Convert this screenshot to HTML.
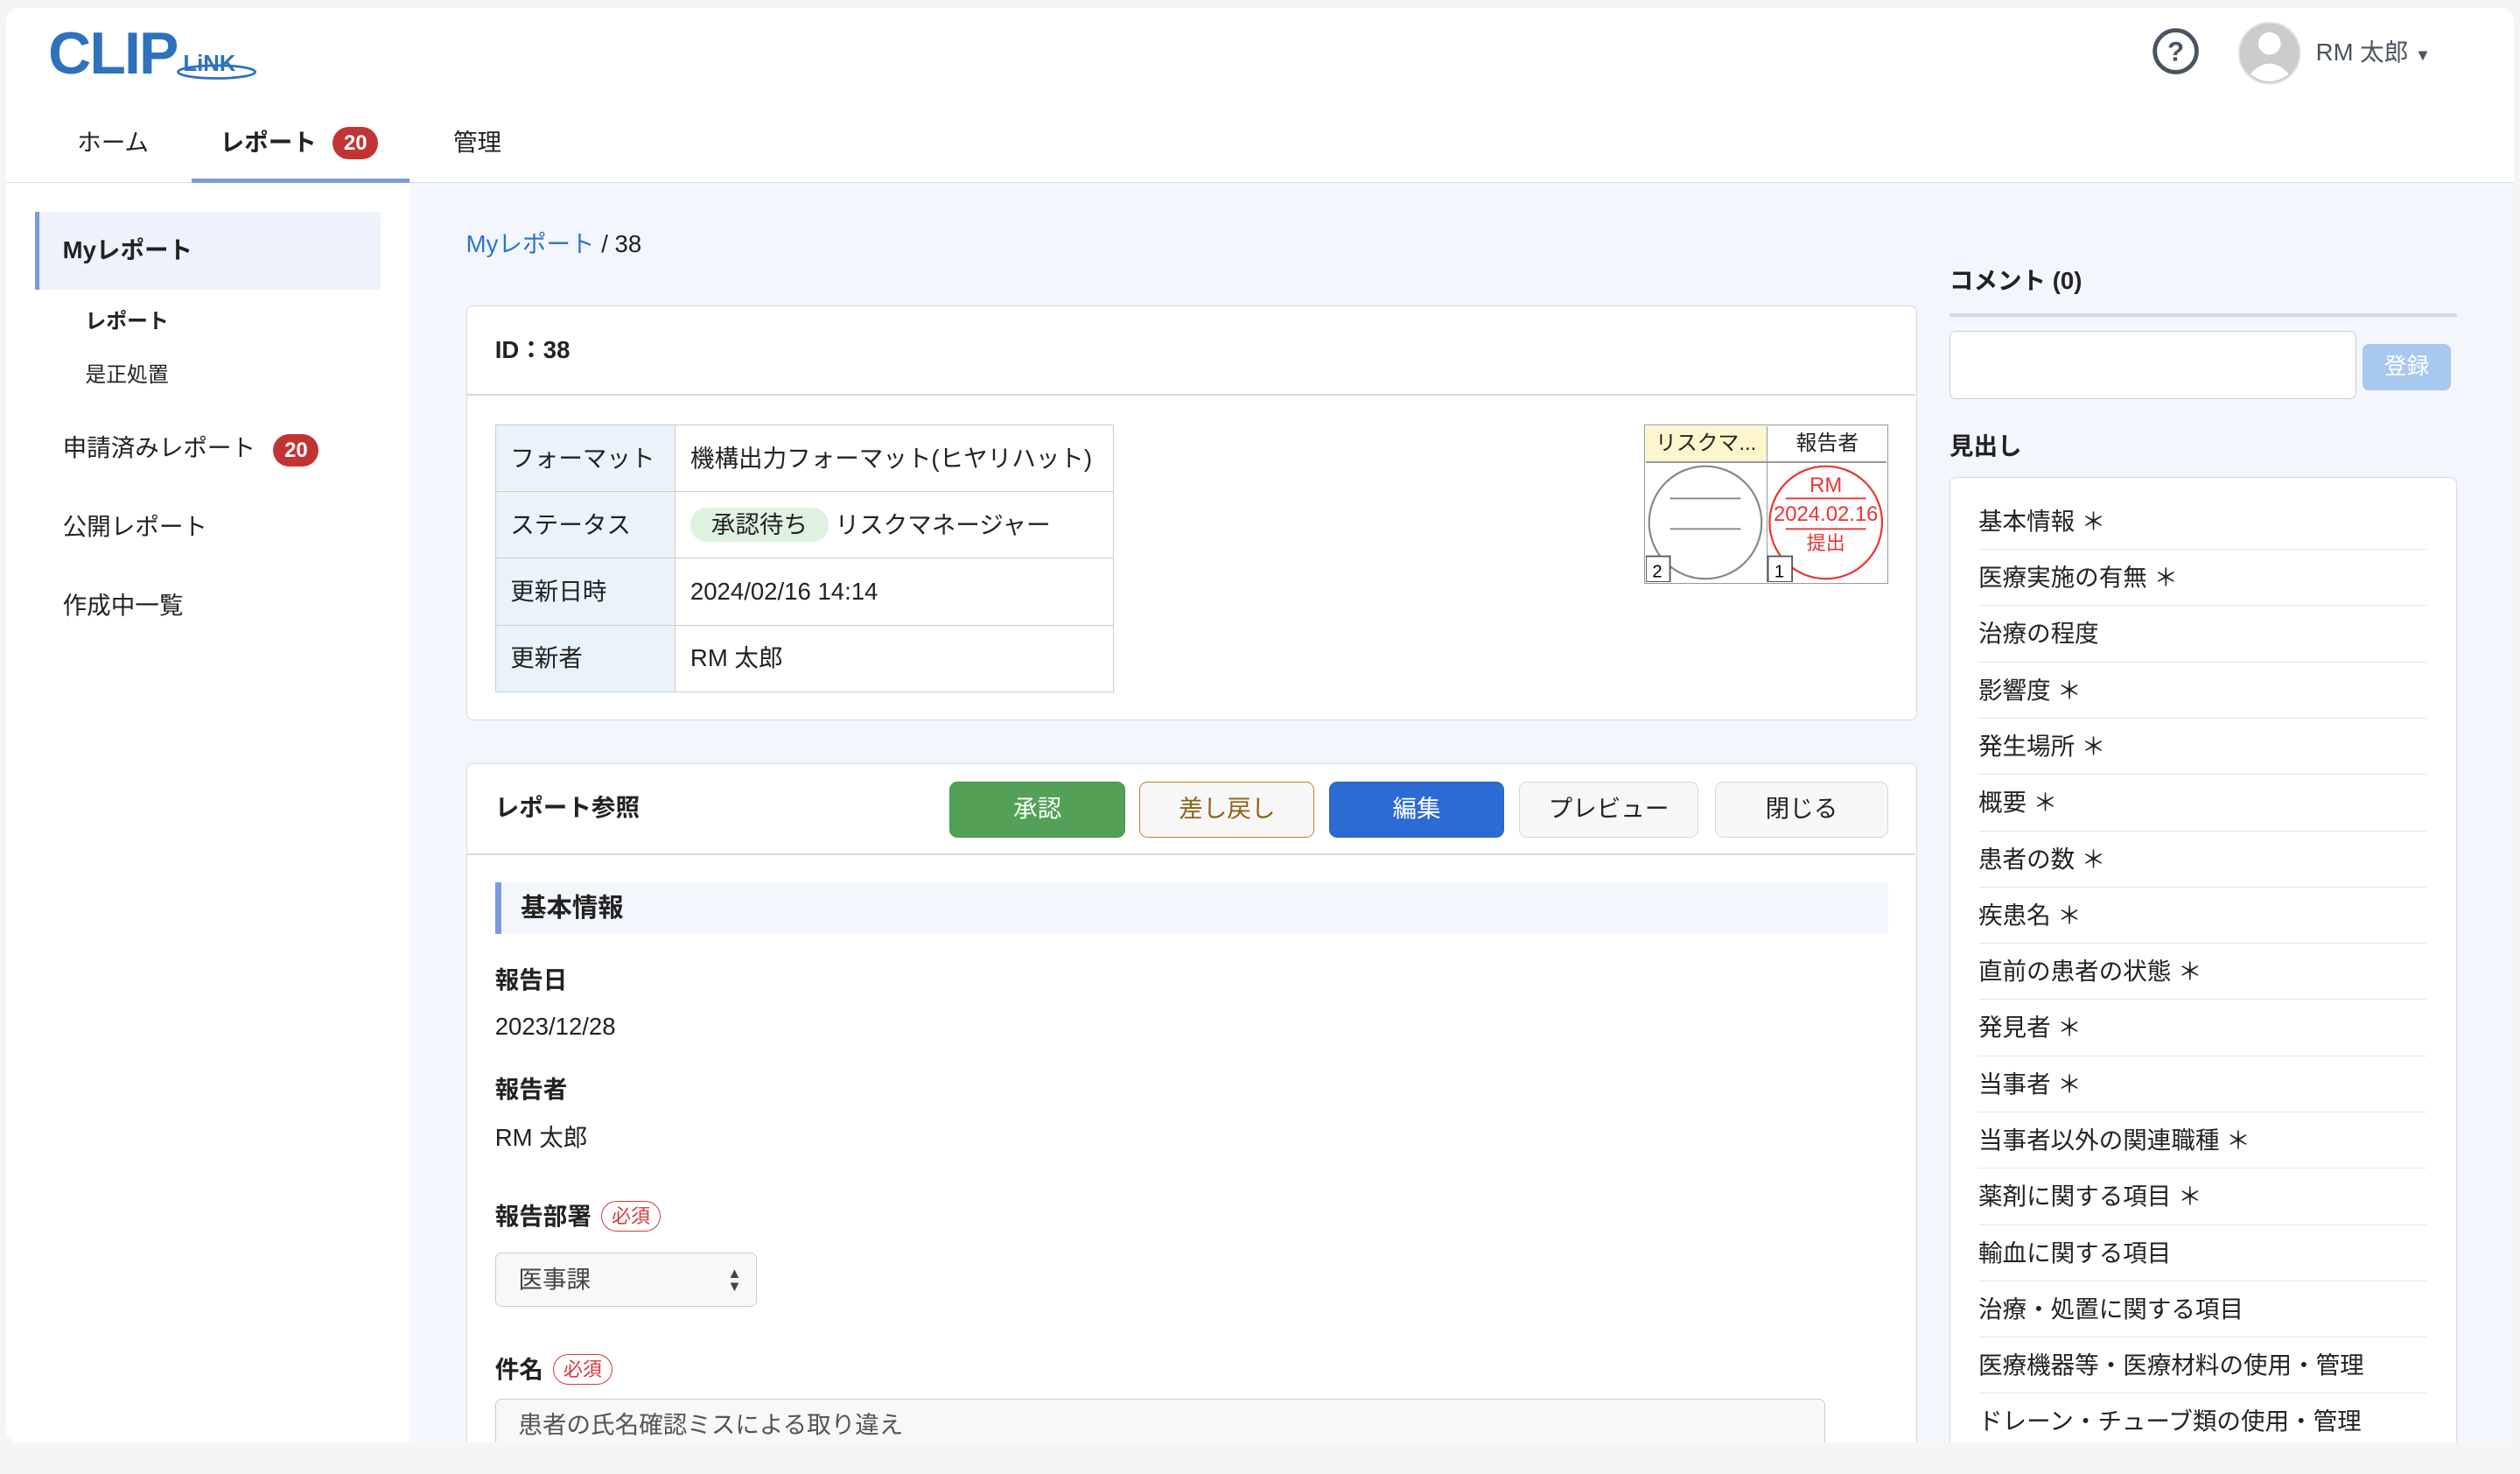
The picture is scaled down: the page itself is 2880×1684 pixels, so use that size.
<!DOCTYPE html>
<html><head><meta charset="utf-8">
<style>
html{zoom:1.8367}
*{box-sizing:border-box;margin:0;padding:0}
body{width:1568px;height:901px;overflow:hidden;background:#f5f5f5;font-family:"Liberation Sans","Noto Sans CJK JP",sans-serif;color:#222;font-size:15px;position:relative;line-height:1.15}
.a{position:absolute}
.card0{left:4px;top:5px;width:1560px;height:892px;background:#fff;border-radius:8px;overflow:hidden}
.b{font-weight:bold}
.badge{background:#c23434;color:#fff;border-radius:11px;font-size:13px;font-weight:bold;padding:2px 7px;line-height:16px}
.tbl{border-collapse:collapse;font-size:15px}
.tbl td{border:1px solid #ccc;height:41.5px;padding:0 9px}
.tbl td.l{background:#e9f3fb;width:112px}
.btn{position:absolute;top:486px;height:35px;width:109px;border-radius:5px;text-align:center;line-height:33px;font-size:15px}
.req{display:inline-block;border:1px solid #d9363e;color:#d9363e;border-radius:10px;font-size:12px;padding:0 6px;line-height:18px;margin-left:6px;font-weight:normal;vertical-align:1px}
.li{position:absolute;left:1231px;width:279px;height:35px;border-bottom:1px solid #e5e5e5;line-height:35px;font-size:15px}
</style></head><body>
<div class="a card0"></div>
<!-- logo -->
<div class="a" style="left:30px;top:13px;font:bold 37px 'Liberation Sans',sans-serif;color:#2e72bd;letter-spacing:-1px;line-height:1.1">CLIP</div>
<div class="a" style="left:114px;top:32px;font:bold 14px 'Liberation Sans',sans-serif;color:#2e72bd">LiNK</div>
<svg class="a" style="left:108px;top:40px" width="54" height="12"><ellipse cx="27" cy="5" rx="24" ry="4" fill="none" stroke="#2e72bd" stroke-width="1.5"/></svg>
<!-- nav -->
<div class="a" style="left:48px;top:80px">ホーム</div>
<div class="a b" style="left:137px;top:80px">レポート</div>
<div class="a badge" style="left:207px;top:79px">20</div>
<div class="a" style="left:282px;top:80px">管理</div>
<div class="a" style="left:4px;top:113px;width:1560px;height:1px;background:#d8dde3"></div>
<div class="a" style="left:119px;top:111px;width:136px;height:3px;background:#7a9ae0"></div>
<!-- user -->
<svg class="a" style="left:1339px;top:17px" width="30" height="30"><circle cx="15" cy="15" r="13" fill="none" stroke="#4a5460" stroke-width="2.6"/><text x="15" y="21" text-anchor="middle" font-size="17" font-weight="bold" fill="#4a5460" font-family="Liberation Sans">?</text></svg>
<svg class="a" style="left:1392px;top:13px" width="40" height="40"><circle cx="20" cy="20" r="19" fill="#ccc" stroke="#e2e2e2"/><circle cx="20" cy="14" r="7" fill="#fff"/><path d="M8 33 Q20 20 32 33 Q20 42 8 33Z" fill="#fff"/></svg>
<div class="a" style="left:1441px;top:24px;color:#4a5460">RM 太郎 <span style="font-size:10px">▼</span></div>
<!-- sidebar / main bg -->
<div class="a" style="left:255px;top:114px;width:1309px;height:783px;background:#f3f7fd"></div>
<div class="a" style="left:22px;top:132px;width:215px;height:48px;background:#eef3fb;border-left:3px solid #7a9ae0"></div>
<div class="a b" style="left:39px;top:147px">Myレポート</div>
<div class="a b" style="left:53px;top:193px;font-size:13px">レポート</div>
<div class="a" style="left:53px;top:226px;font-size:13px">是正処置</div>
<div class="a" style="left:39px;top:270px">申請済みレポート</div>
<div class="a badge" style="left:170px;top:270px">20</div>
<div class="a" style="left:39px;top:319px">公開レポート</div>
<div class="a" style="left:39px;top:368px">作成中一覧</div>
<!-- breadcrumb -->
<div class="a" style="left:290px;top:143px"><span style="color:#2e72d2">Myレポート</span> / 38</div>
<!-- card1 -->
<div class="a" style="left:290px;top:190px;width:903px;height:258px;background:#fff;border:1px solid #d5dae0;border-radius:4px"></div>
<div class="a b" style="left:308px;top:209px">ID：38</div>
<div class="a" style="left:291px;top:245px;width:901px;height:1px;background:#d5dae0"></div>
<table class="a tbl" style="left:308px;top:264px;width:385px">
<tr><td class="l">フォーマット</td><td>機構出力フォーマット(ヒヤリハット)</td></tr>
<tr><td class="l">ステータス</td><td><span style="background:#dff2e1;border-radius:10px;padding:2px 13px">承認待ち</span> リスクマネージャー</td></tr>
<tr><td class="l">更新日時</td><td>2024/02/16 14:14</td></tr>
<tr><td class="l">更新者</td><td>RM 太郎</td></tr>
</table>
<!-- stamps -->
<div class="a" style="left:1023px;top:264px;width:152px;height:99px;border:1px solid #999;background:#fff"></div>
<div class="a" style="left:1024px;top:265px;width:75px;height:22px;background:#fdf6cc;font-size:13px;text-align:center;line-height:22px">リスクマ...</div>
<div class="a" style="left:1099px;top:265px;width:1px;height:97px;background:#999"></div>
<div class="a" style="left:1024px;top:287px;width:150px;height:1px;background:#999"></div>
<div class="a" style="left:1100px;top:265px;width:74px;height:22px;font-size:13px;text-align:center;line-height:22px">報告者</div>
<svg class="a" style="left:1024px;top:288px" width="150" height="74"><circle cx="37" cy="37" r="35" fill="none" stroke="#888" stroke-width="1.2"/><line x1="15" y1="22" x2="59" y2="22" stroke="#888"/><line x1="15" y1="41" x2="59" y2="41" stroke="#888"/>
<circle cx="112" cy="37" r="35" fill="none" stroke="#e33" stroke-width="1.2"/><line x1="87" y1="22" x2="137" y2="22" stroke="#e33"/><line x1="87" y1="41" x2="137" y2="41" stroke="#e33"/>
<text x="112" y="18" text-anchor="middle" font-size="13" fill="#e33" font-family="Liberation Sans">RM</text><text x="112" y="36" text-anchor="middle" font-size="13" fill="#e33" font-family="Liberation Sans">2024.02.16</text><text x="112" y="54" text-anchor="middle" font-size="12" fill="#e33" font-family="Noto Sans CJK JP">提出</text>
<rect x="0" y="58" width="15" height="16" fill="#fff" stroke="#555"/><text x="4" y="71" font-size="11" font-family="Liberation Sans">2</text>
<rect x="76" y="58" width="15" height="16" fill="#fff" stroke="#555"/><text x="80" y="71" font-size="11" font-family="Liberation Sans">1</text></svg>
<!-- card2 -->
<div class="a" style="left:290px;top:475px;width:903px;height:422px;background:#fff;border:1px solid #d5dae0;border-bottom:none;border-radius:4px 4px 0 0"></div>
<div class="a b" style="left:308px;top:494px">レポート参照</div>
<div class="a" style="left:291px;top:531px;width:901px;height:1px;background:#d5dae0"></div>
<div class="btn" style="left:591px;background:#52a156;color:#fff;border:1px solid #4a8f4d">承認</div>
<div class="btn" style="left:709px;background:#f7f7f8;color:#8f6116;border:1px solid #b8862e">差し戻し</div>
<div class="btn" style="left:827px;background:#2b6bd3;color:#fff;border:1px solid #2560c0">編集</div>
<div class="btn" style="left:945px;width:112px;background:#f6f7f8;border:1px solid #d5d5d5">プレビュー</div>
<div class="btn" style="left:1067px;width:108px;background:#f6f7f8;border:1px solid #d5d5d5">閉じる</div>
<div class="a" style="left:308px;top:549px;width:867px;height:32px;background:#f3f7fd;border-left:4px solid #7a9ae0"></div>
<div class="a b" style="left:324px;top:556px;font-size:16px">基本情報</div>
<div class="a b" style="left:308px;top:601px">報告日</div>
<div class="a" style="left:308px;top:630px">2023/12/28</div>
<div class="a b" style="left:308px;top:669px">報告者</div>
<div class="a" style="left:308px;top:699px">RM 太郎</div>
<div class="a b" style="left:308px;top:747px">報告部署<span class="req">必須</span></div>
<div class="a" style="left:308px;top:779px;width:163px;height:34px;border:1px solid #ccc;border-radius:4px;background:#f8f8f8;padding:8px 14px;color:#444">医事課<span style="position:absolute;right:9px;top:9px;font-size:9px;line-height:8px">▲<br>▼</span></div>
<div class="a b" style="left:308px;top:842px">件名<span class="req">必須</span></div>
<div class="a" style="left:308px;top:870px;width:828px;height:40px;border:1px solid #ccc;border-radius:4px;background:#f8f8f8;padding:7px 14px;color:#555">患者の氏名確認ミスによる取り違え</div>
<!-- right column -->
<div class="a b" style="left:1213px;top:166px">コメント (0)</div>
<div class="a" style="left:1213px;top:195px;width:316px;height:2px;background:#d5dae0"></div>
<div class="a" style="left:1213px;top:206px;width:253px;height:42px;border:1px solid #ccc;border-radius:4px;background:#fff"></div>
<div class="a" style="left:1470px;top:214px;width:55px;height:29px;background:#a9c8ef;color:#fff;border-radius:4px;text-align:center;line-height:29px;font-size:14px">登録</div>
<div class="a b" style="left:1213px;top:269px">見出し</div>
<div class="a" style="left:1213px;top:297px;width:316px;height:600px;background:#fff;border:1px solid #d5dae0;border-bottom:none;border-radius:4px 4px 0 0"></div>
<div class="li" style="top:307px">基本情報 ＊</div>
<div class="li" style="top:342px">医療実施の有無 ＊</div>
<div class="li" style="top:377px">治療の程度</div>
<div class="li" style="top:412px">影響度 ＊</div>
<div class="li" style="top:447px">発生場所 ＊</div>
<div class="li" style="top:482px">概要 ＊</div>
<div class="li" style="top:517px">患者の数 ＊</div>
<div class="li" style="top:552px">疾患名 ＊</div>
<div class="li" style="top:587px">直前の患者の状態 ＊</div>
<div class="li" style="top:622px">発見者 ＊</div>
<div class="li" style="top:657px">当事者 ＊</div>
<div class="li" style="top:692px">当事者以外の関連職種 ＊</div>
<div class="li" style="top:727px">薬剤に関する項目 ＊</div>
<div class="li" style="top:762px">輸血に関する項目</div>
<div class="li" style="top:797px">治療・処置に関する項目</div>
<div class="li" style="top:832px">医療機器等・医療材料の使用・管理</div>
<div class="li" style="top:867px">ドレーン・チューブ類の使用・管理</div>
<div class="a" style="left:0;top:897px;width:1568px;height:20px;background:#f5f5f5"></div>
</body></html>
